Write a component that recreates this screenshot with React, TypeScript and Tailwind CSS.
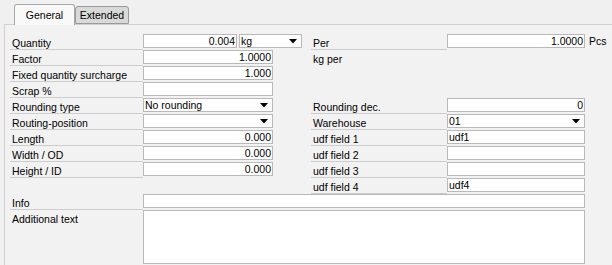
const font = { fontFamily: '"Liberation Sans", Arial, sans-serif' };

function Arrow() {
  return (
    <svg width="8" height="5" viewBox="0 0 8 5" className="shrink-0">
      <path d="M0 0h8L4 4.5z" fill="#000" />
    </svg>
  );
}

function Field({ value = '', align = 'right', className = 'w-[130px]' }: { value?: string; align?: 'left' | 'right'; className?: string }) {
  return (
    <div
      className={`h-[14px] border border-[#b9b9b9] bg-white px-[1px] leading-[12px] ${align === 'right' ? 'text-right' : 'text-left'} ${className}`}
    >
      {value}
    </div>
  );
}

function Select({ value = '', className = 'w-[130px]' }: { value?: string; className?: string }) {
  return (
    <div className={`h-[14px] border border-[#b9b9b9] bg-white pl-[1px] pr-[4px] leading-[12px] flex items-center justify-between ${className}`}>
      <span>{value}</span>
      <Arrow />
    </div>
  );
}

function Label({ text, line = true }: { text?: string; line?: boolean }) {
  return (
    <div className={`h-[16px] pl-[2px] leading-[18px] ${line && text ? 'border-b border-[#cdcdcd]' : ''}`}>{text}</div>
  );
}

type Row = { left?: string; leftField?: React.ReactNode; right?: string; rightLine?: boolean; rightField?: React.ReactNode };

const rows: Row[] = [
  {
    left: 'Quantity',
    leftField: (
      <div className="flex gap-[2px]">
        <Field value="0.004" className="w-[94px]" />
        <Select value="kg" className="w-[63px]" />
      </div>
    ),
    right: 'Per',
    rightField: (
      <div className="flex items-center gap-[4px]">
        <Field value="1.0000" className="w-[138px]" />
        <span className="leading-[14px]">Pcs</span>
      </div>
    ),
  },
  { left: 'Factor', leftField: <Field value="1.0000" />, right: 'kg per', rightLine: false },
  { left: 'Fixed quantity surcharge', leftField: <Field value="1.000" /> },
  { left: 'Scrap %', leftField: <Field /> },
  { left: 'Rounding type', leftField: <Select value="No rounding" />, right: 'Rounding dec.', rightField: <Field value="0" className="w-[138px]" /> },
  { left: 'Routing-position', leftField: <Select />, right: 'Warehouse', rightField: <Select value="01" className="w-[138px]" /> },
  { left: 'Length', leftField: <Field value="0.000" />, right: 'udf field 1', rightField: <Field value="udf1" align="left" className="w-[138px]" /> },
  { left: 'Width / OD', leftField: <Field value="0.000" />, right: 'udf field 2', rightField: <Field className="w-[138px]" /> },
  { left: 'Height / ID', leftField: <Field value="0.000" />, right: 'udf field 3', rightField: <Field className="w-[138px]" /> },
  { right: 'udf field 4', rightField: <Field value="udf4" align="left" className="w-[138px]" /> },
];

export default function App() {
  return (
    <div className="w-[612px] h-[265px] bg-[#f0f0f0] text-[10.5px] text-black overflow-hidden" style={font}>
      {/* Tabs */}
      <div className="flex items-end h-[24px] pl-[14px] pt-[4px]">
        <div className="relative z-10 h-[21px] w-[61px] -mb-[1px] border border-b-0 border-[#a8a8a8] rounded-t-[3px] bg-[#f9f9f9] text-center leading-[20px]">
          General
        </div>
        <div className="h-[18px] w-[54px] border border-[#9a9a9a] rounded-t-[3px] bg-[#d9d9d9] text-center leading-[17px]">
          Extended
        </div>
      </div>

      {/* Panel */}
      <div className="ml-[4px] h-[241px] border-l border-t border-[#d0d0d0] bg-[#f2f2f2] pt-[9px] pl-[5px]">
        <div className="grid grid-cols-[133px_168px_136px_auto]">
          {rows.map((r, i) => (
            <div key={i} className="contents">
              <Label text={r.left} />
              <div className="h-[16px]">{r.leftField}</div>
              <Label text={r.right} line={r.rightLine !== false} />
              <div className="h-[16px]">{r.rightField}</div>
            </div>
          ))}
        </div>
        <div className="flex">
          <div className="w-[133px] h-[16px] border-b border-[#cdcdcd] pl-[2px] leading-[18px]">Info</div>
          <div className="h-[16px]">
            <Field className="w-[442px]" />
          </div>
        </div>
        <div className="flex">
          <div className="w-[133px] pl-[2px] leading-[18px]">Additional text</div>
          <div className="w-[442px] h-[54px] border border-[#b9b9b9] bg-white" />
        </div>
      </div>
    </div>
  );
}
